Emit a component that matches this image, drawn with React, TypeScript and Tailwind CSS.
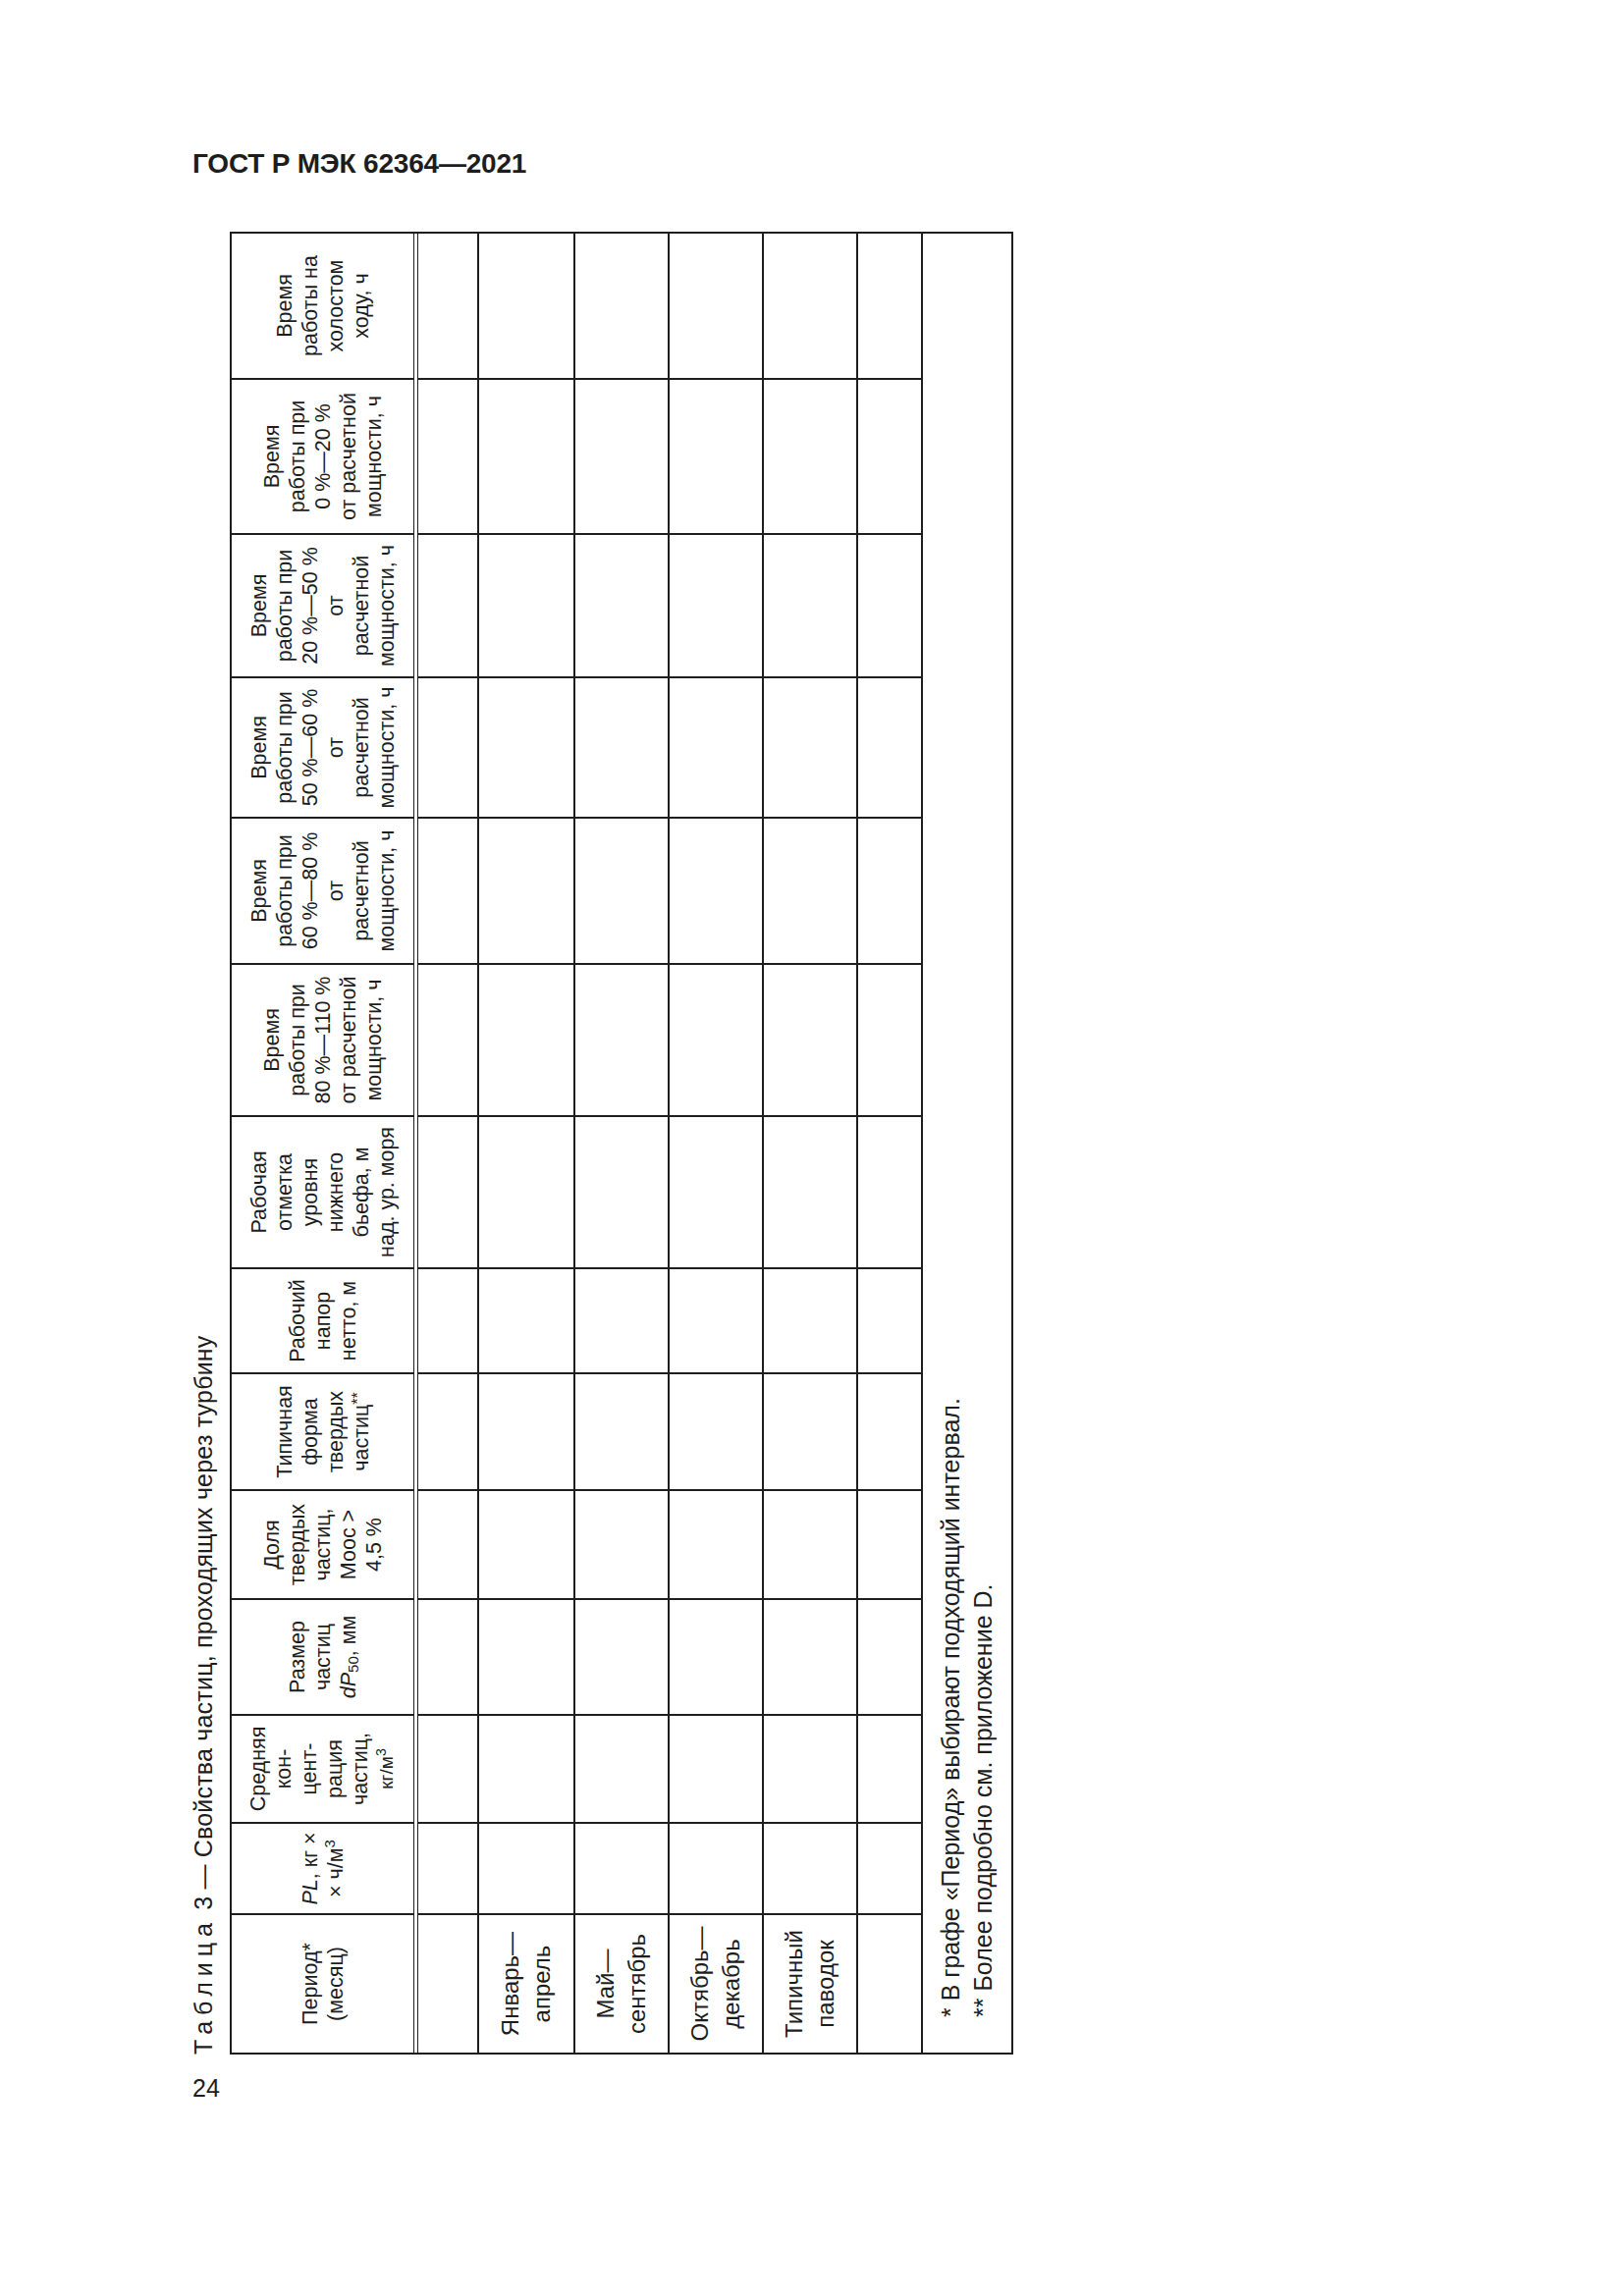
import React from "react";
import clsx from "clsx";

// column widths of the table before it is turned (left to right = bottom to top on the page)
const cols = [
  "w-[142px]",
  "w-[93px]",
  "w-[110px]",
  "w-[118px]",
  "w-[111px]",
  "w-[119px]",
  "w-[107px]",
  "w-[155px]",
  "w-[155px]",
  "w-[149px]",
  "w-[143px]",
  "w-[146px]",
  "w-[158px]",
  "w-[147px]",
];

const line = "border-[#1e1e1e]";

function Row({
  h,
  cells,
  last,
  text = "text-[24px] leading-[32px]",
}: {
  h: string;
  cells?: React.ReactNode[];
  last?: boolean;
  text?: string;
}) {
  return (
    <div className={clsx("flex", h, !last && "border-b-2", line)}>
      {cols.map((w, i) => (
        <div
          key={i}
          className={clsx(
            "flex shrink-0 items-center justify-center whitespace-nowrap text-center",
            w,
            text,
            i < cols.length - 1 && "border-r-2",
            line
          )}
        >
          {cells?.[i]}
        </div>
      ))}
    </div>
  );
}

const work = (range: string, split: boolean) => (
  <span>
    Время
    <br />
    работы при
    <br />
    {range}
    <br />
    {split ? (
      <>
        от
        <br />
        расчетной
      </>
    ) : (
      "от расчетной"
    )}
    <br />
    мощности, ч
  </span>
);

const header: React.ReactNode[] = [
  <span>
    Период*
    <br />
    (месяц)
  </span>,
  <span>
    <i>PL</i>, кг ×
    <br />× ч/м<sup className="text-[15px]">3</sup>
  </span>,
  <span>
    Средняя
    <br />
    кон-
    <br />
    цент-
    <br />
    рация
    <br />
    частиц,
    <br />
    <span className="text-[19px]">
      кг/м<sup className="text-[14px]">3</sup>
    </span>
  </span>,
  <span>
    Размер
    <br />
    частиц
    <br />
    <i>dP</i>
    <sub className="text-[15px]">50</sub>, мм
  </span>,
  <span>
    Доля
    <br />
    твердых
    <br />
    частиц,
    <br />
    Моос &gt;
    <br />
    4,5 %
  </span>,
  <span>
    Типичная
    <br />
    форма
    <br />
    твердых
    <br />
    частиц<sup className="top-[-0.3em] text-[16px]">**</sup>
  </span>,
  <span>
    Рабочий
    <br />
    напор
    <br />
    нетто, м
  </span>,
  <span>
    Рабочая
    <br />
    отметка
    <br />
    уровня
    <br />
    нижнего
    <br />
    бьефа, м
    <br />
    над. ур. моря
  </span>,
  work("80 %—110 %", false),
  work("60 %—80 %", true),
  work("50 %—60 %", true),
  work("20 %—50 %", true),
  work("0 %—20 %", false),
  <span>
    Время
    <br />
    работы на
    <br />
    холостом
    <br />
    ходу, ч
  </span>,
];

const periods = [
  ["Январь—", "апрель"],
  ["Май—", "сентябрь"],
  ["Октябрь—", "декабрь"],
  ["Типичный", "паводок"],
];

export default function App() {
  return (
    <div className="min-h-[2339px] w-[1654px] bg-white pl-[193px] pt-[153px] font-['Liberation_Sans',Arial,sans-serif] text-[#1d1d1d]">
      <h1 className="ml-[3px] text-[28px] font-bold leading-[28px] tracking-[-0.2px]">
        ГОСТ Р МЭК 62364—2021
      </h1>

      {/* the table is printed turned a quarter to the left */}
      <div className="mt-[55px] h-[1857px] w-[839px]">
        <div className="w-[1857px] origin-top-left translate-y-[1857px] -rotate-90">
          <p className="mb-[13px] h-[28px] whitespace-nowrap text-[25px] leading-[28px] tracking-[0.2px]">
            <span className="tracking-[0.24em]">Таблица</span> 3 — Свойства частиц, проходящих через турбину
          </p>
          <div className={clsx("w-[1857px] border-2", line)}>
            <Row h="h-[185px]" cells={header} last text="text-[21.5px] leading-[26px]" />
            <div className={clsx("h-[5px] border-y", line)} />
            <Row h="h-[62px]" />
            {periods.map((p, i) => (
              <Row
                key={p[0]}
                h={i === 0 ? "h-[98px]" : "h-[96px]"}
                cells={[
                  <span>
                    {p[0]}
                    <br />
                    {p[1]}
                  </span>,
                ]}
              />
            ))}
            <Row h="h-[66px]" />
            <div className="flex h-[90px] flex-col justify-center pl-[36px] text-[25px] leading-[33px]">
              <p>* В графе «Период» выбирают подходящий интервал.</p>
              <p>** Более подробно см. приложение D.</p>
            </div>
          </div>
        </div>
      </div>

      <p className="ml-[3px] mt-[22px] text-[25px] leading-[25px]">24</p>
    </div>
  );
}
